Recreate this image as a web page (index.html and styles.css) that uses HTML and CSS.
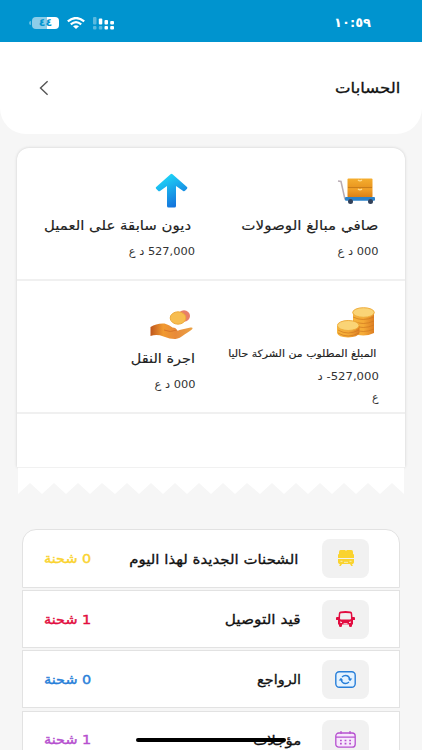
FILE: index.html
```html
<!DOCTYPE html>
<html lang="ar" dir="rtl">
<head>
<meta charset="utf-8">
<title>الحسابات</title>
<link rel="stylesheet" href="styles.css">
</head>
<body>
<div class="status">
  <span class="time">١٠:٥٩</span>
  <div class="indicators">
    <svg width="22" height="13" viewBox="0 0 22 13"><g fill="#fff"><g opacity=".35"><rect x="0" y="0" width="3.5" height="7.500" rx="1"/><rect x="0" y="9" width="3.500" height="3.500" rx="1"/><rect x="5.800" y="9" width="3.500" height="3.500" rx="1"/></g><rect x="5.800" y="1.500" width="3.500" height="6" rx="1"/><rect x="11.500" y="3" width="3.500" height="4.500" rx="1"/><rect x="17.200" y="4" width="3.800" height="3.500" rx="1"/><rect x="11.500" y="9" width="3.500" height="3.500" rx="1"/><rect x="17.200" y="9" width="3.800" height="3.500" rx="1"/></g></svg>
    <svg width="18" height="12" viewBox="0 0 18 12"><g fill="none" stroke="#fff" stroke-width="2.200"><path d="M.8 4.300Q9-2.300 17.200 4.300"/><path d="M3.800 7.400Q9 3 14.200 7.400"/></g><path d="M6 9.300Q9 7 12 9.300L9 12z" fill="#fff"/></svg>
    <div class="battery">٤٤</div>
  </div>
</div>
<header class="header">
  <h1>الحسابات</h1>
  <svg width="10" height="16" viewBox="0 0 10 16"><path d="M8.600 1.200L1.500 8l7.100 6.800" fill="none" stroke="#555" stroke-width="1.400"/></svg>
</header>
<main>
  <section class="summary">
    <div class="cell">
      <svg class="pic" width="39" height="36" viewBox="0 0 39 36"><defs><linearGradient id="box" x2="0" y2="1"><stop stop-color="#f5ae2f"/><stop offset=".48" stop-color="#e99620"/><stop offset=".5" stop-color="#f4a52b"/><stop offset="1" stop-color="#db7e13"/></linearGradient></defs><path d="M1 8l3 .5 4 18" fill="none" stroke="#b9adb5" stroke-width="1.500"/><rect x="10.500" y="5.500" width="25" height="19" rx="1" fill="url(#box)"/><path d="M11 14.600h24" stroke="#bd7318" stroke-width=".8"/><path d="M21 7q2 1.600 4 0M21 16q2 1.600 4 0" fill="none" stroke="#ffdd91" stroke-width="1.200"/><rect x="8" y="24" width="30" height="3.800" rx="1" fill="#2c82c9"/><circle cx="13.500" cy="28.500" r="2.500" fill="#31415b"/><circle cx="33.500" cy="28.500" r="2.500" fill="#31415b"/></svg>
      <h2><span>صافي مبالغ الوصولات</span></h2>
      <p><span>000 د ع</span></p>
    </div>
    <div class="cell cell-left">
      <svg class="pic arrow" width="33" height="36" viewBox="0 0 33 36"><defs><linearGradient id="up" x2=".5" y2="1"><stop stop-color="#20e8fd"/><stop offset="1" stop-color="#1474dc"/></linearGradient></defs><path d="M15.500 1.300q1-1 2 0L32 14q.8.800 0 1.700l-2 2q-.8.800-1.800.2L21 13v20q0 1.500-1.500 1.500h-6Q12 34.500 12 33V13l-7 4.900q-1 .7-1.900-.2l-2-2Q.3 14.800 1.200 14z" fill="url(#up)"/></svg>
      <h2 class="inset"><span>ديون سابقة على العميل</span></h2>
      <p><span>527,000 د ع</span></p>
    </div>
    <div class="cell">
      <svg class="pic" width="39" height="36" viewBox="0 1 39 36"><defs><linearGradient id="gold"><stop stop-color="#f6b43c"/><stop offset=".5" stop-color="#f5aa36"/><stop offset="1" stop-color="#dd7e22"/></linearGradient></defs><path d="M16 8v20q10 5 21 0V8z" fill="url(#gold)"/><path d="M16 12q10 5 21 0M16 16q10 5 21 0M16 20q10 5 21 0M16 24q10 5 21 0" fill="none" stroke="#cf7920" stroke-width=".7"/><ellipse cx="26.500" cy="7.500" rx="10.800" ry="4.800" fill="#fad476" stroke="#efac3b"/><path d="M0 21v7q1 4 11 4.500 10-.5 11.500-4.500v-7z" fill="url(#gold)"/><path d="M1 25q10 6 21 0M1 28q10 6 21 0" fill="none" stroke="#cf7920" stroke-width=".7"/><ellipse cx="11.200" cy="20.500" rx="10.800" ry="5" fill="#fad476" stroke="#efac3b"/></svg>
      <h2 class="small"><span>المبلغ المطلوب من الشركة حاليا</span></h2>
      <p class="due"><span>527,000- د</span><br>ع</p>
    </div>
    <div class="cell cell-left">
      <svg class="pic" width="43" height="36" viewBox="0 0 43 36"><defs><linearGradient id="hand"><stop stop-color="#bf561c"/><stop offset=".3" stop-color="#f19a30"/><stop offset=".6" stop-color="#e88a3a"/><stop offset="1" stop-color="#eba346"/></linearGradient></defs><ellipse cx="34" cy="10" rx="6" ry="5.800" fill="#e87f68"/><ellipse cx="28" cy="12" rx="7.800" ry="6.200" fill="#f7bd50" stroke="#edaa3d"/><path d="M.5 21q6-4 14-3.500 5 1.500 8 4 4 .3 4 2.500 1 1 3 0l11-2.500q2.500-.3 2 1.300-2 2.200-8 5.700-5 4-9 4.500-5 .2-12-2.500Q7 28 .5 30z" fill="url(#hand)"/><path d="M14 24q6 3 13 0" fill="none" stroke="#d8742a"/></svg>
      <h2 class="short"><span>اجرة النقل</span></h2>
      <p><span>000 د ع</span></p>
    </div>
  </section>
  <svg class="tear" width="386" height="27" viewBox="0 0 386 27" preserveAspectRatio="none"><path d="M0 0H386V27L374 16 362 27 350 16 338 27 326 16 314 27 302 16 290 27 278 16 266 27 254 16 242 27 229 16 217 27 205 16 193 27 181 16 169 27 157 16 145 27 133 16 121 27 109 16 97 27 84 16 72 27 60 16 48 27 36 16 24 27 12 16 0 27z" fill="#fff"/><path d="M0 .5H386" stroke="#f1f1f1"/></svg>
  <section class="list">
    <div class="row yellow"><div class="tile"><svg width="16" height="17" viewBox="0 0 16 17"><path d="M2.500 0h4.700L8 1l.8-1h4.700Q15 0 15 2v2q1 0 1 1v3H0V5q0-1 1-1V2Q1 0 2.500 0zM0 9h16v3.500L15 14h-1l.8 2h-1.600L12 14H4l-1.200 2H1.200L2 14H1l-1-1.500z" fill="currentColor"/><path d="M2.500 11.300h2M11.500 11.300h2M6 12.300h4" stroke="#f8efb9"/></svg></div><h3><span>الشحنات الجديدة لهذا اليوم</span></h3><strong><span>0 شحنة</span></strong></div>
    <div class="row red"><div class="tile"><svg width="19" height="17" viewBox="0 0 19 17"><path fill-rule="evenodd" d="M4.500 .6Q9.500-.4 14.500 .6 16 .8 16.200 2.500L16.500 6H18q1 0 1 1v1.500q0 .5-1 .5h-1v4.500h-1V15q0 1-1.500 1T13 15v-1.500H6V15q0 1-1.500 1T3 15v-1.500H2V9H1Q0 9 0 8.500V7q0-1 1-1h1.500l.3-3.500Q3 .8 4.500 .6zM5 2.300Q4.300 2.300 4.200 3L4 7.500Q4 8.500 5 8.500h9q1 0 1-1L14.800 3q-.1-.7-.8-.7-4.500-.6-9 0z" fill="currentColor"/><path d="M4 11l2 .5M15 11l-2 .5M7.500 12.800h4" stroke="#fff" stroke-width="1"/></svg></div><h3><span>قيد التوصيل</span></h3><strong><span>1 شحنة</span></strong></div>
    <div class="row blue"><div class="tile"><svg width="21" height="17" viewBox="0 0 21 17"><rect x=".8" y=".8" width="19.400" height="15.400" rx="3.500" fill="#e5f3ff" stroke="currentColor" stroke-width="1.400"/><path d="M7 6Q8.500 4.500 10.500 4.500q3.500 0 4.500 4M14 11q-1.500 1.500-3.500 1.500-3.500 0-4.500-4" fill="none" stroke="currentColor" stroke-width="1.300"/><path d="M12.700 7.600H17.300L15 10.200zM8.300 9.400H3.700L6 6.800z" fill="currentColor"/></svg></div><h3><span>الرواجع</span></h3><strong><span>0 شحنة</span></strong></div>
    <div class="row purple"><div class="tile"><svg width="21" height="17" viewBox="0 0 21 17"><rect x=".8" y="2" width="19.400" height="14.200" rx="3" fill="#f7e8fc" stroke="currentColor" stroke-width="1.300"/><path d="M1 6.200h19M6 0v3M15 0v3" stroke="currentColor" stroke-width="1.200"/><path d="M5 9.500h11M5 12.700h11" stroke="currentColor" stroke-width="1.700" stroke-dasharray="1.800 2.800"/></svg></div><h3><span>مؤجلات</span></h3><strong><span>1 شحنة</span></strong></div>
  </section>
</main>
<div class="home"></div>
</body>
</html>
```
FILE: styles.css
```css
* { box-sizing: border-box; }
html, body { height: 750px; overflow: hidden; }
body { margin: 0; background: #f6f6f6; color: #222; font-family: "DejaVu Sans", sans-serif; }
svg { display: block; flex: none; }
h1, h2, h3, p { margin: 0; font-weight: 400; white-space: nowrap; }
.status { height: 42px; background: #0094cf; color: #fff; display: flex; justify-content: space-between; padding: 0 51px 0 29px; }
.time { font-size: 13px; line-height: 45px; font-weight: 700; }
.indicators { display: flex; align-items: center; gap: 8px; padding-top: 4px; }
.battery { width: 27px; height: 12px; border-radius: 4px; background: linear-gradient(90deg, #8bcde9 55%, #fff 55%); color: #0094cf; font-size: 11px; line-height: 12px; font-weight: 700; text-align: center; position: relative; margin-left: 3px; }
.battery::after { content: ""; position: absolute; left: -3px; top: 4px; width: 2px; height: 4px; border-radius: 2px 0 0 2px; background: #65bfe2; }
.header { height: 92px; border-radius: 0 0 26px 26px; background: #fff; display: flex; align-items: center; justify-content: space-between; padding: 0 22px 0 38.500px; }
h1 { font-size: 15px; color: #111; -webkit-text-stroke: .3px; transform: scaleX(1.1); transform-origin: right; }
main { padding-top: 14px; }
.summary { width: 388px; height: 319px; margin-right: 17px; background: #fff; border-radius: 12px 12px 0 0; box-shadow: 0 0 3px #ccc; display: grid; grid-template-columns: 194px 194px; grid-template-rows: 133px 133px 1fr; }
.cell { border-bottom: 2px solid #f0f0f0; padding: 25px 26.500px 0 0; }
.cell-left { padding-right: 16px; }
.pic { margin-right: 2.500px; }
.arrow { margin-right: 7.500px; }
h2 span, h3 span, p span, strong span { display: inline-block; transform: scaleX(1.11); transform-origin: right; }
h2 { font-size: 13.500px; line-height: 20px; margin-top: 6px; -webkit-text-stroke: .15px; }
h2 span { transform: scaleX(1.12); }
h2.inset { margin-right: 4px; }
h2.inset span { transform: scaleX(1.105); }
h2.small { font-size: 10px; line-height: 18px; margin: 3px 2px 0 0; }
h2.small span { transform: scaleX(1.095); }
h2.short span { transform: scaleX(1.07); }
p { font-size: 11px; line-height: 20px; margin-top: 7px; color: #333; }
p span { transform: scaleX(1.035); }
p.due { margin-top: 4px; line-height: 20.500px; }
p.due span { transform: scaleX(1.06); }
.tear { margin-right: 18px; }
.list { width: 378px; margin: 35px 22px 0 0; }
.row { height: 58px; margin-bottom: 2.400px; background: #fff; border: 1px solid #e2e2e2; display: flex; align-items: center; padding: 0 30px 0 21px; }
.row:first-child { border-radius: 14px 14px 0 0; height: 59px; margin-bottom: 2px; }
.tile { width: 47px; height: 39px; border-radius: 8px; background: #f1f1f1; display: grid; place-items: center; }
h3 { font-size: 13.500px; color: #111; margin-right: 21px; -webkit-text-stroke: .3px; }
.yellow h3 { margin-right: 24px; }
.red h3 span { transform: scaleX(1.14); }
.blue h3 span { transform: scaleX(1.07); }
strong { font-size: 13px; font-weight: 400; margin-right: auto; white-space: nowrap; -webkit-text-stroke: .4px; }
strong span { transform-origin: left; }
.yellow { color: #fad32f; }
.red { color: #e20d40; }
.blue { color: #287fd9; }
.purple { color: #b650cf; }
.home { position: fixed; left: 136px; top: 738px; width: 150px; height: 4px; border-radius: 2px; background: #000; }
```
